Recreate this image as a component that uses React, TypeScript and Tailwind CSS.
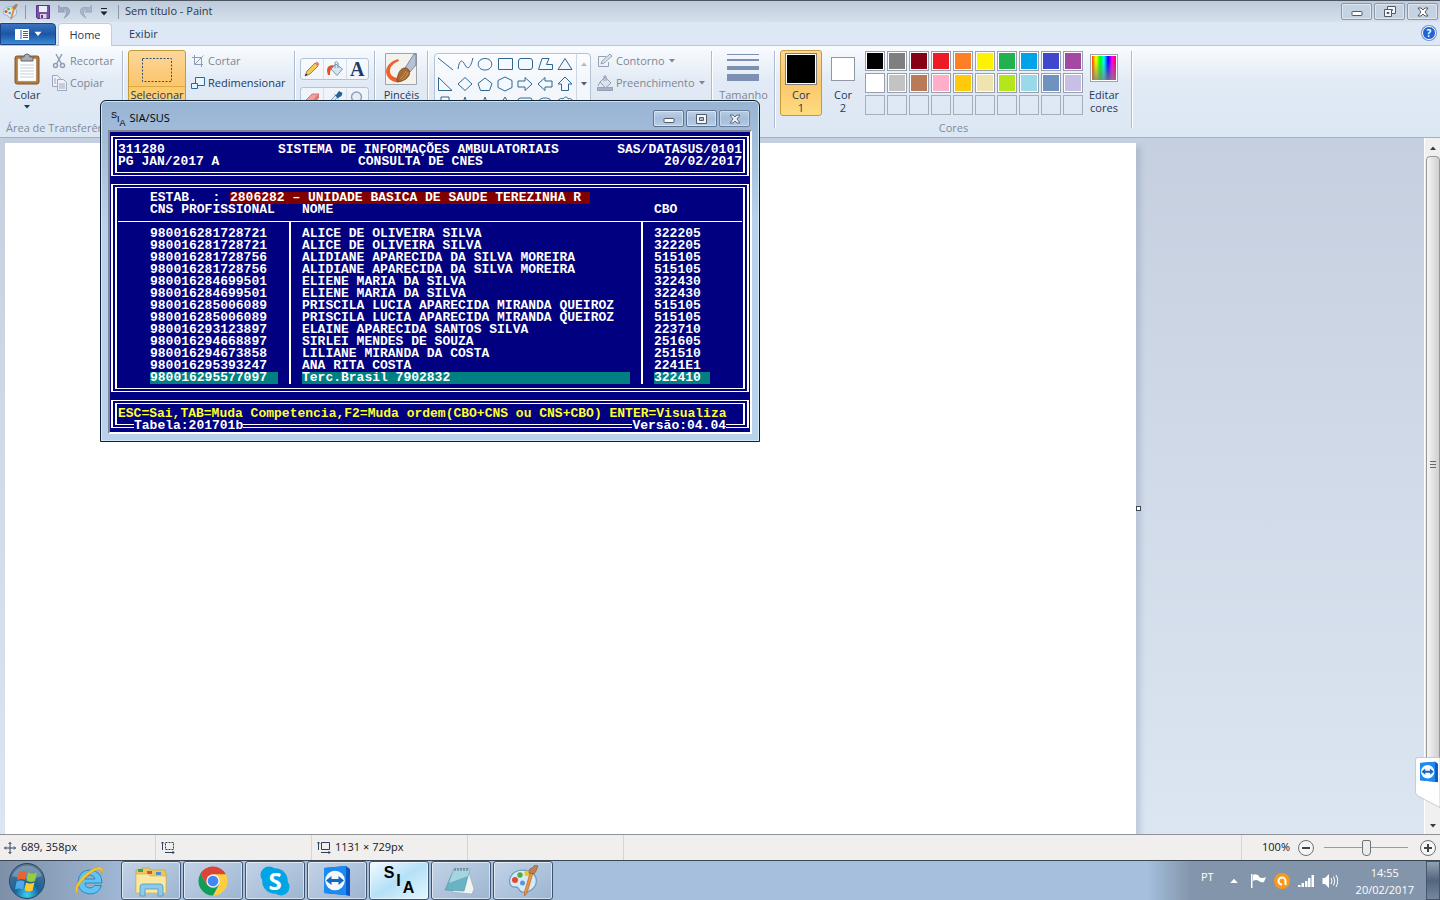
import React from "react";
import clsx from "clsx";

const palette = [
  "#000000", "#7f7f7f", "#880015", "#ed1c24", "#ff7f27", "#fff200", "#22b14c", "#00a2e8", "#3f48cc", "#a349a4",
  "#ffffff", "#c3c3c3", "#b97a57", "#ffaec9", "#ffc90e", "#efe4b0", "#b5e61d", "#99d9ea", "#7092be", "#c8bfe7"
];

type Professional = { cns: string; name: string; cbo: string };

const professionals: Professional[] = [
  { cns: "980016281728721", name: "ALICE DE OLIVEIRA SILVA", cbo: "322205" },
  { cns: "980016281728721", name: "ALICE DE OLIVEIRA SILVA", cbo: "322205" },
  { cns: "980016281728756", name: "ALIDIANE APARECIDA DA SILVA MOREIRA", cbo: "515105" },
  { cns: "980016281728756", name: "ALIDIANE APARECIDA DA SILVA MOREIRA", cbo: "515105" },
  { cns: "980016284699501", name: "ELIENE MARIA DA SILVA", cbo: "322430" },
  { cns: "980016284699501", name: "ELIENE MARIA DA SILVA", cbo: "322430" },
  { cns: "980016285006089", name: "PRISCILA LUCIA APARECIDA MIRANDA QUEIROZ", cbo: "515105" },
  { cns: "980016285006089", name: "PRISCILA LUCIA APARECIDA MIRANDA QUEIROZ", cbo: "515105" },
  { cns: "980016293123897", name: "ELAINE APARECIDA SANTOS SILVA", cbo: "223710" },
  { cns: "980016294668897", name: "SIRLEI MENDES DE SOUZA", cbo: "251605" },
  { cns: "980016294673858", name: "LILIANE MIRANDA DA COSTA", cbo: "251510" },
  { cns: "980016295393247", name: "ANA RITA COSTA", cbo: "2241E1" },
  { cns: "980016295577097", name: "Terc.Brasil 7902832", cbo: "322410" }
];

const selectedRow = professionals.length - 1;

// 16x16 outlines shown in the shapes gallery
const shapes = [
  "M1 2 L16 14",
  "M1 13 C3 1 6 5 8 9 S13 14 16 2",
  "M8 2.5 C17 2.5 17 14 8 14 S-1 2.5 8 2.5Z",
  "M1.5 2.5H15.5V13.5H1.5Z",
  "M4 2.5H13Q15.5 2.5 15.5 5V11Q15.5 13.5 13 13.5H4Q1.500 13.500 1.500 11V5Q1.500 2.500 4 2.500Z",
  "M1.500 13.500L5 2.500H12L9.500 8.500H15.500V13.500Z",
  "M8 2.500L15 13.500H1Z",
  "M1.500 1.500V14.500H15Z",
  "M8 1.500L15 8L8 14.500L1 8Z",
  "M8 2L15 7.500L12.500 14.500H3.500L1 7.500Z",
  "M8 1L15 4.500V11.500L8 15L1 11.500V4.500Z",
  "M1 5H8V1.500L15 8L8 14.500V11H1Z",
  "M15 5H8V1.500L1 8L8 14.500V11H15Z",
  "M8 1L15 8H11.500V14.500H4.500V8H1Z",
  "M4 1H12V8H15L8 15L1 8H4Z",
  "M8 1L10 6.500L15 8L10 9.500L8 15L6 9.500L1 8L6 6.500Z",
  "M8 1L10 6H15L11 9.500L12.500 15L8 12L3.500 15L5 9.500L1 6H6Z",
  "M8 1L10 4.500H15L12.500 8L15 11.500H10L8 15L6 11.500H1L3.500 8L1 4.500H6Z",
  "M4 2H13Q15 2 15 4V9Q15 11 13 11H8L4 15V11Q1 11 1 9V4Q1 2 4 2Z",
  "M8 2C17 2 17 11 8 11L4 15V11C-1 9 0 2 8 2Z",
  "M3 8C-1 5 3 1 6 3C8 0 11 1 11 3C15 1 17 6 14 8C15 12 10 13 8 11C5 13 1 12 3 8Z"
];

const PaletteIcon = ({ className }: { className?: string }) => (
  <svg viewBox="0 0 32 32" className={className} aria-hidden="true">
    <path d="M4 11C9 3 26 3 29 13C31 22 23 28 15 27C11 26 13 22 9 22C3 23 1 17 4 11Z" fill="#d9e9f6" stroke="#6f9dc4" strokeWidth="1.300" />
    <circle cx="8" cy="15" r="3" fill="#e04a35" />
    <circle cx="13" cy="10" r="2.700" fill="#4fae3d" />
    <circle cx="20" cy="8.500" r="2.700" fill="#f1c232" />
    <circle cx="15.500" cy="18" r="2.500" fill="#5b97d6" />
    <path d="M26 8L20 28L17.500 31L17.500 27L23 8Z" fill="#ee9440" stroke="#b6642a" strokeWidth="0.700" />
    <path d="M22 8Q22 3 25 3L28 0L31 1L29 6L27 9Z" fill="#ba8157" stroke="#865430" strokeWidth="0.600" />
  </svg>
);

const TeamViewerIcon = ({ className }: { className?: string }) => (
  <svg viewBox="0 0 32 32" className={className} aria-hidden="true">
    <path d="M3 3L25 1L29 4V31L24 30L3 28Z" fill="#0757c8" />
    <path d="M3 3L25 1V30L3 28Z" fill="#1b8bf2" />
    <circle cx="14" cy="15.500" r="9.800" fill="#f5f9fd" />
    <path d="M5 15.500L10.500 11V14H17.500V11L23 15.500L17.500 20V17H10.500V20Z" fill="#1567c4" />
  </svg>
);

const SiaIcon = ({ large }: { large?: boolean }) => (
  <span
    className={clsx(
      "flex justify-center font-['Liberation_Sans',sans-serif] text-black",
      large ? "h-[31px] gap-0.5 text-base leading-4 font-bold" : "h-4 text-[9px] leading-2"
    )}
    aria-hidden="true"
  >
    <span className="self-start">S</span>
    <span className="self-center">I</span>
    <span className="self-end">A</span>
  </span>
);

const DownArrow = ({ className }: { className?: string }) => (
  <svg viewBox="0 0 6 4" className={clsx("h-1 w-1.5 shrink-0", className)} aria-hidden="true">
    <path d="M0 0H6L3 3.500Z" fill="currentColor" />
  </svg>
);

const WindowButtons = ({ restored, blue }: { restored?: boolean; blue?: boolean }) => {
  const button = clsx(
    "flex h-[17px] w-[31px] items-center justify-center rounded-[2px] border shadow-[inset_0_0_0_1px_rgba(255,255,255,0.45)]",
    blue ? "border-[#5e7390] bg-linear-to-b from-[#bfd2e8] via-[#a7bfdb] to-[#b7cee8]" : "border-[#8b98aa] bg-[#c5d2e2]"
  );
  return (
    <div className="flex gap-0.5">
      <button type="button" aria-label="Minimizar" className={button}>
        <svg viewBox="0 0 12 10" className="h-2.5 w-3">
          <rect x="1" y="4.500" width="10" height="4" rx="0.500" fill="#fff" stroke="#545966" />
        </svg>
      </button>
      <button type="button" aria-label="Maximizar" className={button}>
        <svg viewBox="0 0 13 12" className="h-3 w-[13px]" fill="#f4f7fa" stroke="#545966">
          {restored ? (
            <>
              <path d="M4.500 0.500H12.500V7.500H4.500Z" />
              <path d="M7.500 3.500H9.500V4.500H7.500Z" />
              <path d="M1.500 3.500H8.500V10.500H1.500Z" />
              <path d="M4 6.500H6V7.500H4Z" />
            </>
          ) : (
            <>
              <path d="M1.500 1.500H11.500V10.500H1.500Z" />
              <path d="M4.500 4.500H8.500V7.500H4.500Z" fill="#a9bdd4" />
            </>
          )}
        </svg>
      </button>
      <button type="button" aria-label="Fechar" className={clsx(button, blue && "opacity-80")}>
        <svg viewBox="0 0 12 10" className="h-2.5 w-3">
          <path d="M1 1H4L6 3L8 1H11L8 5L11 9H8L6 7L4 9H1L4 5Z" fill="#fff" stroke="#545966" />
        </svg>
      </button>
    </div>
  );
};

const TitleBar = () => (
  <header className="flex h-[22px] items-center border-t border-[#4d5560] bg-linear-to-b from-[#bdcada] to-[#d6e1ed] pr-0.5 pl-0.5">
    <PaletteIcon className="size-4" />
    <span className="ml-[7px] h-3.5 w-px bg-[#8c99a9]" />
    <button type="button" aria-label="Salvar" className="ml-2.5">
      <svg viewBox="0 0 14 14" className="size-3.5">
        <path d="M0.500 0.500H13.500V13.500H1.500L0.500 12.500Z" fill="#7b4fa8" stroke="#59368a" />
        <path d="M3 1H11V7H3Z" fill="#e9eef8" />
        <path d="M4 9H10.500V13.500H4Z" fill="#d8d5e6" />
        <path d="M5 10H7V13H5Z" fill="#59368a" />
      </svg>
    </button>
    <button type="button" aria-label="Desfazer" className="ml-2">
      <svg viewBox="0 0 13 14" className="h-3.5 w-[13px]">
        <path d="M0 0V7H7L4.500 5C9 3 10 8 6 13C14 9 14 0 3 3Z" fill="#9eacc2" stroke="#8797af" strokeWidth="0.800" />
      </svg>
    </button>
    <button type="button" aria-label="Refazer" className="ml-2">
      <svg viewBox="0 0 13 14" className="h-3.5 w-[13px]">
        <path d="M13 0V7H6L8.500 5C4 3 3 8 7 13C-1 9 -1 0 10 3Z" fill="#a8b5c8" stroke="#93a1b8" strokeWidth="0.800" />
      </svg>
    </button>
    <button type="button" aria-label="Personalizar" className="ml-2">
      <svg viewBox="0 0 8 8" className="size-2">
        <path d="M1 0H7V1H1ZM0.500 3.500H7.500L4 7.500Z" fill="#1b1f26" />
      </svg>
    </button>
    <span className="ml-2.5 h-3.5 w-px bg-[#8c99a9]" />
    <h1 className="mr-auto ml-1.5 text-[11px] text-[#2b3543]">Sem título - Paint</h1>
    <WindowButtons restored />
  </header>
);

const TabRow = () => (
  <nav className="flex h-6 items-end border-b border-[#b8c6dc] bg-[#dee8f5]">
    <button
      type="button"
      aria-label="Arquivo"
      className="flex h-[22px] w-14 items-center justify-center gap-1.5 rounded-tr-sm border border-[#1c4484] bg-linear-to-b from-[#3a74bd] via-[#1c56a6] to-[#3a8bd6] text-white"
    >
      <svg viewBox="0 0 14 11" className="h-[11px] w-3.5">
        <path d="M0 0H14V11H0Z" fill="#fff" />
        <path d="M6 1V10M8 2.500H13M8 4.500H13M8 6.500H13M8 8.500H13" stroke="#2b62ad" />
      </svg>
      <DownArrow className="scale-125" />
    </button>
    <button
      type="button"
      className="-mb-px ml-0.5 h-[23px] w-[54px] rounded-t-sm border border-b-0 border-[#c0cde0] bg-white text-[11px] text-[#1e395b]"
    >
      Home
    </button>
    <button type="button" className="ml-[17px] h-[22px] text-[11px] text-[#1e395b]">
      Exibir
    </button>
    <button
      type="button"
      aria-label="Ajuda"
      className="mr-1 mb-[5px] ml-auto flex size-3.5 items-center justify-center rounded-full border border-white bg-[#2163d4] text-[10px] font-bold text-white ring-1 ring-[#6f95cf]"
    >
      ?
    </button>
  </nav>
);

const Separator = () => <span className="mt-[5px] h-[77px] w-0.5 shrink-0 border-l border-[#aebbd0] bg-white" />;

const ClipboardGroup = () => (
  <section className="flex w-[122px] shrink-0 flex-col pt-1">
    <div className="flex h-[70px]">
      <button type="button" className="mt-[3px] ml-2 flex w-[38px] flex-col items-center self-start text-[#1e395b]">
        <svg viewBox="0 0 26 32" className="h-8 w-[26px]">
          <rect x="1" y="3" width="24" height="28" rx="2" fill="#b07a3f" stroke="#83562a" />
          <path d="M4 6H22V28H4Z" fill="#fff" stroke="#d9d9d9" strokeWidth="0.500" />
          <path d="M6 12H20M6 15H20M6 18H20M6 21H20M6 24H20" stroke="#c5cfdb" />
          <path d="M7 8V4H10Q10 1 13 1T16 4H19V8Z" fill="#a8acb2" stroke="#63676d" />
        </svg>
        <span className="mt-0.5 text-[11px] leading-4">Colar</span>
        <DownArrow className="mt-0.5" />
      </button>
      <div className="ml-1.5 flex flex-col text-[11px] leading-[22px] text-[#7f8690]">
        <button type="button" className="flex h-[22px] items-center gap-1">
          <svg viewBox="0 0 14 16" className="h-4 w-3.5" fill="none" stroke="#8e9db3" strokeWidth="1.500">
            <path d="M4 1L9.500 11M10 1L4.500 11" />
            <circle cx="3.500" cy="12.500" r="2" />
            <circle cx="10.500" cy="12.500" r="2" />
          </svg>
          Recortar
        </button>
        <button type="button" className="flex h-[22px] items-center gap-0.5">
          <svg viewBox="0 0 16 16" className="size-4" fill="#eef2f8" stroke="#9ba8bb">
            <path d="M0.500 0.500H5.500L8.500 3.500V11.500H0.500Z" />
            <path d="M5.500 4.500H11.500L14.500 7.500V15.500H5.500Z" />
            <path d="M2 4H4M2 6H4M2 8H4M7 9H13M7 11H13M7 13H13" />
          </svg>
          Copiar
        </button>
      </div>
    </div>
    <h2 className="ml-1.5 text-[11px] leading-4 whitespace-nowrap text-[#7d8a9e]">Área de Transferência</h2>
  </section>
);

const ImageGroup = () => (
  <section className="flex w-[170px] shrink-0 pt-1 pl-1">
    <button
      type="button"
      className="flex h-[66px] w-[58px] flex-col items-center rounded-[3px] border border-[#c49a3c] bg-linear-to-b from-[#fcd79b] via-[#fbc66c] to-[#fddc7f] text-[#1e395b]"
    >
      <svg viewBox="0 0 32 26" className="mt-1.5 h-[26px] w-8" fill="none" stroke="#34536f">
        <path d="M1.500 1.500H30.500V24.500H1.500Z" strokeDasharray="2 1.500" />
      </svg>
      <span className="mt-[3px] w-full border-t border-[#dba845] text-center text-[11px] leading-4">Selecionar</span>
    </button>
    <div className="ml-1 flex flex-col pl-px text-[11px] leading-[22px]">
      <button type="button" className="flex h-[22px] items-center gap-[3px] text-[#7f8690]">
        <svg viewBox="0 0 14 14" className="size-3.5" fill="none" stroke="#8e9db3">
          <path d="M3.500 1V10.500H12M1 3.500H10.500V13M4 10L12.500 1.500" />
        </svg>
        Cortar
      </button>
      <button type="button" className="flex h-[22px] items-center gap-[3px] text-[#1e395b]">
        <svg viewBox="0 0 14 14" className="size-3.5" fill="#eaf4fc" stroke="#246a9c">
          <path d="M4.500 1.500H13.500V9.500H4.500Z" />
          <path d="M0.500 7.500H6.500V12.500H0.500Z" />
        </svg>
        Redimensionar
      </button>
    </div>
  </section>
);

const toolButton = "flex w-[23px] items-center justify-center border-l border-[#d5deea] first:border-l-0";

const ToolsGroup = () => (
  <section className="flex w-[78px] shrink-0 flex-col gap-[7px] pt-3 pl-1">
    <div className="flex h-[22px] w-[69px] rounded-[3px] border border-[#b5c3d6] bg-white/50">
      <button type="button" aria-label="Lápis" className={toolButton}>
        <svg viewBox="0 0 16 16" className="size-4">
          <path d="M1 15L3 10L11 2L14 5L6 13Z" fill="#f4c855" stroke="#8f6a2c" strokeWidth="0.800" />
          <path d="M11 2L13 0.500L15.500 3L14 5Z" fill="#e58079" />
          <path d="M1 15L2 12.500L3.500 14Z" fill="#222" />
        </svg>
      </button>
      <button type="button" aria-label="Preencher com cor" className={toolButton}>
        <svg viewBox="0 0 18 16" className="h-4 w-[18px]">
          <path d="M5 8L10 3L16.500 8L11 14.500Z" fill="#d3e4f2" stroke="#7d95ab" />
          <path d="M9 7V1.500Q10.500 -0.500 12 2V7" fill="none" stroke="#7d95ab" />
          <path d="M2 14C0 8 1 4 8 4L5 8Q4 10 4 14Z" fill="#e2512c" />
        </svg>
      </button>
      <button
        type="button"
        aria-label="Texto"
        className={clsx(toolButton, "font-['Liberation_Serif',serif] text-xl leading-5 font-bold text-[#1c3c66]")}
      >
        A
      </button>
    </div>
    <div className="flex h-[22px] w-[69px] rounded-[3px] border border-[#b5c3d6] bg-white/50">
      <button type="button" aria-label="Borracha" className={toolButton}>
        <svg viewBox="0 0 16 16" className="size-4">
          <path d="M1 11L8 4H15L9 11Z" fill="#f2a09c" stroke="#c4625f" strokeWidth="0.800" />
          <path d="M1 11H9L15 4V8L9 14H1Z" fill="#d97773" />
        </svg>
      </button>
      <button type="button" aria-label="Seletor de cores" className={toolButton}>
        <svg viewBox="0 0 16 16" className="size-4">
          <path d="M2 14L3 11L9 5L11 7L5 13Z" fill="#dbeaf5" stroke="#6f8faa" strokeWidth="0.800" />
          <path d="M7 4L9 5L12 1L15.500 3L14.500 6L11 8L12 10Z" fill="#24619b" />
        </svg>
      </button>
      <button type="button" aria-label="Lupa" className={toolButton}>
        <svg viewBox="0 0 16 16" className="size-4">
          <circle cx="7.500" cy="7" r="5" fill="#e3eefa" stroke="#93a3b8" strokeWidth="1.500" />
          <path d="M11 11L15 15" stroke="#93a3b8" strokeWidth="2" />
        </svg>
      </button>
    </div>
  </section>
);

const BrushesGroup = () => (
  <section className="flex w-[51px] shrink-0 justify-center pt-[7px]">
    <button type="button" className="flex flex-col items-center self-start text-[#1e395b]">
      <svg viewBox="0 0 32 32" className="size-8">
        <path d="M0.500 0.500H31.500V31.500H0.500Z" fill="#f3f2ef" stroke="#a2a5a8" />
        <path d="M13 6C6 8 1 13 1 19C2 26 8 30 15 29C18 28 17 25 14 25C8 25 5 22 5 18C5 13 9 10 14 8Z" fill="#f0602d" />
        <path d="M20 15L29 1H31V12L25 19Z" fill="#b4c2d4" stroke="#5b6b80" strokeWidth="0.700" />
        <path d="M12 29C12 20 16 14 21 15C28 17 25 28 12 29Z" fill="#a66b32" stroke="#704219" strokeWidth="0.700" />
        <path d="M15 26Q19 23 21 18M17 27Q22 24 23 19" fill="none" stroke="#d3a468" strokeWidth="0.700" />
      </svg>
      <span className="mt-0.5 text-[11px] leading-4">Pincéis</span>
    </button>
  </section>
);

const ShapesGroup = () => (
  <section className="flex w-[282px] shrink-0 pt-1.5 pl-[5px]">
    <div className="mt-px flex h-[66px] w-[157px] overflow-hidden rounded-sm border border-[#b5c3d6] bg-white/60">
      <div className="grid flex-1 grid-cols-7 content-start">
        {shapes.map((d) => (
          <button type="button" key={d} aria-label="Forma" className="flex h-5 items-center justify-center">
            <svg viewBox="0 0 17 16" className="h-4 w-[17px]" fill="#f3f9fe" stroke="#2f6793">
              <path d={d} />
            </svg>
          </button>
        ))}
      </div>
      <div className="flex w-3.5 flex-col items-center border-l border-[#ccd6e4] text-[#4c5b70]">
        <DownArrow className="mt-2 rotate-180 opacity-40" />
        <DownArrow className="mt-4" />
        <DownArrow className="mt-4" />
      </div>
    </div>
    <div className="-mt-0.5 ml-1.5 flex flex-col text-[11px] leading-[22px] text-[#7f8690]">
      <button type="button" className="flex h-[22px] items-center gap-[3px]">
        <svg viewBox="0 0 16 16" className="size-4" fill="none" stroke="#93a1b5">
          <path d="M9 3.500H1.500V13.500H11.500V9" />
          <path d="M4 11L5 8L13 1L15 3L7 10Z" fill="#dbe2ec" />
        </svg>
        Contorno
        <DownArrow className="ml-px" />
      </button>
      <button type="button" className="flex h-[22px] items-center gap-[3px]">
        <svg viewBox="0 0 16 16" className="size-4" fill="#dbe2ec" stroke="#93a1b5">
          <path d="M0.500 12.500H15.500V15.500H0.500Z" fill="#a5b2c6" />
          <path d="M3 7L8 2L14 8L8.500 13Z" />
          <path d="M7 6V1H9V6M3 7L1 11" fill="none" />
        </svg>
        Preenchimento
        <DownArrow className="ml-px" />
      </button>
    </div>
  </section>
);

const SizeGroup = () => (
  <section className="flex w-[61px] shrink-0 justify-center pt-2">
    <button type="button" className="flex flex-col items-center self-start text-[#7f8690]">
      <span className="flex h-[33px] w-8 flex-col">
        <span className="h-px bg-[#7b90b3]" />
        <span className="mt-1 h-0.5 bg-[#7b90b3]" />
        <span className="mt-[5px] h-1 bg-[#7b90b3]" />
        <span className="mt-1 h-[7px] bg-[#7b90b3]" />
      </span>
      <span className="text-[11px] leading-4">Tamanho</span>
    </button>
  </section>
);

const ColorsGroup = () => (
  <section className="flex w-[355px] shrink-0 flex-col pt-1">
    <div className="flex h-[70px] pl-1 text-[11px] leading-[13px] text-[#1e395b]">
      <button
        type="button"
        className="flex h-[66px] w-[42px] flex-col items-center rounded-[3px] border border-[#c49a3c] bg-linear-to-b from-[#fcd79b] via-[#fbc66c] to-[#fddc7f] pt-0.5"
      >
        <span className="size-8 border border-[#7f7f7f] bg-black shadow-[inset_0_0_0_1px_#fff]" />
        <span className="mt-[3px]">
          Cor
          <br />1
        </span>
      </button>
      <button type="button" className="flex h-[66px] w-[42px] flex-col items-center pt-[7px]">
        <span className="size-6 border border-[#8f99a6] bg-white" />
        <span className="mt-[7px]">
          Cor
          <br />2
        </span>
      </button>
      <div className="mt-px ml-px grid grid-cols-10 content-start gap-0.5">
        {palette.map((color) => (
          <button
            type="button"
            key={color}
            aria-label={color}
            className="size-5 border border-[#98a0ab] shadow-[inset_0_0_0_1px_#fff]"
            style={{ backgroundColor: color }}
          />
        ))}
        {Array.from({ length: 10 }, (_, i) => (
          <button type="button" key={i} aria-label="Cor personalizada" className="size-5 border border-[#a6aeb9]" />
        ))}
      </div>
      <button type="button" className="ml-[3px] flex w-9 flex-col items-center pt-1">
        <span className="size-7 border border-[#a0a4aa] bg-white p-px">
          <span className="block size-full bg-[linear-gradient(to_top,rgba(128,128,128,0.8),transparent_80%),linear-gradient(to_right,#f40,#ff0,#0f0,#0ff,#00f,#f0f,#f04)]" />
        </span>
        <span className="mt-1.5">
          Editar
          <br />
          cores
        </span>
      </button>
    </div>
    <h2 className="text-center text-[11px] leading-4 text-[#7d8a9e]">Cores</h2>
  </section>
);

const Ribbon = () => (
  <div className="flex h-[92px] overflow-hidden border-b border-[#9fb0c8] bg-linear-to-b from-[#f9fcff] via-[#e1eaf5] via-40% to-[#dce7f4]">
    <ClipboardGroup />
    <Separator />
    <ImageGroup />
    <Separator />
    <ToolsGroup />
    <Separator />
    <BrushesGroup />
    <Separator />
    <ShapesGroup />
    <Separator />
    <SizeGroup />
    <Separator />
    <ColorsGroup />
    <Separator />
  </div>
);

const Workspace = () => (
  <main className="flex flex-1 bg-linear-to-b from-[#c5cfdf] to-[#dce6f2]">
    <div className="mt-[5px] ml-[5px] w-[1131px] bg-white shadow-[5px_4px_5px_rgba(110,130,160,0.25)]" />
    <span className="mt-11 size-[5px] self-center border border-[#3c4653] bg-white" />
    <div className="ml-auto flex w-4 flex-col items-center border-l border-white bg-[#f0f0f0] text-[#3a3a3a]">
      <DownArrow className="mt-2 rotate-180" />
      <div className="mt-1.5 flex h-[618px] w-3.5 items-center justify-center rounded-sm border border-[#979797] bg-linear-to-r from-[#f6f6f6] to-[#cfcfd2]">
        <span className="h-2 w-1.5 bg-[repeating-linear-gradient(to_bottom,#666_0_1px,transparent_1px_3px)]" />
      </div>
      <DownArrow className="mt-auto mb-1.5" />
    </div>
  </main>
);

const SizeIcon = ({ dashed }: { dashed?: boolean }) => (
  <svg viewBox="0 0 14 13" className="h-[13px] w-3.5 shrink-0" fill="none" stroke="#2e425f">
    <path d="M4.500 1.500H12.500V8.500H4.500Z" strokeDasharray={dashed ? "2 1" : undefined} />
    <path d="M1.500 1V9M0 2.500L1.500 1L3 2.500M4 11.500H13M11.500 10L13 11.500L11.500 13" />
  </svg>
);

const StatusBar = () => (
  <footer className="flex h-[26px] items-stretch border-t border-[#8e9297] bg-[#f1eeee] text-[11px] text-[#14181d]">
    <div className="flex w-[156px] items-center gap-[5px] border-r border-[#d5d3d3] pl-1">
      <svg viewBox="0 0 12 12" className="size-3" fill="none" stroke="#2e425f">
        <path d="M6 0.500V11.500M0.500 6H11.500M4.500 2L6 0.500L7.500 2M4.500 10L6 11.500L7.500 10M2 4.500L0.500 6L2 7.500M10 4.500L11.500 6L10 7.500" />
      </svg>
      689, 358px
    </div>
    <div className="flex w-[156px] items-center border-r border-[#d5d3d3] pl-[5px]">
      <SizeIcon dashed />
    </div>
    <div className="flex w-[156px] items-center gap-1 border-r border-[#d5d3d3] pl-[5px]">
      <SizeIcon />
      1131 × 729px
    </div>
    <div className="w-[156px] border-r border-[#d5d3d3]" />
    <div className="ml-auto flex items-center border-l border-[#d5d3d3] pr-1 pl-5">
      <label htmlFor="zoom">100%</label>
      <button type="button" aria-label="Menos zoom" className="ml-2">
        <svg viewBox="0 0 16 16" className="size-4">
          <circle cx="8" cy="8" r="7.500" fill="#f6f6f6" stroke="#6d7074" />
          <path d="M4 8H12" stroke="#444" strokeWidth="2" />
        </svg>
      </button>
      <input
        id="zoom"
        type="range"
        defaultValue={50}
        className="mr-3 ml-2.5 h-4 w-[84px] appearance-none bg-[linear-gradient(#9b9b9b,#9b9b9b)] bg-[length:100%_1px] bg-center bg-no-repeat [&::-webkit-slider-thumb]:h-4 [&::-webkit-slider-thumb]:w-[9px] [&::-webkit-slider-thumb]:appearance-none [&::-webkit-slider-thumb]:rounded-[2px] [&::-webkit-slider-thumb]:rounded-b-[4px] [&::-webkit-slider-thumb]:border [&::-webkit-slider-thumb]:border-[#6f7276] [&::-webkit-slider-thumb]:bg-[#ececec]"
      />
      <button type="button" aria-label="Mais zoom">
        <svg viewBox="0 0 16 16" className="size-4">
          <circle cx="8" cy="8" r="7.500" fill="#f6f6f6" stroke="#6d7074" />
          <path d="M4 8H12M8 4V12" stroke="#444" strokeWidth="2" />
        </svg>
      </button>
    </div>
  </footer>
);

const taskButton =
  "flex h-[39px] w-[60px] items-center justify-center rounded-[3px] border border-[#3f556f] shadow-[inset_0_0_0_1px_rgba(255,255,255,0.55)]";
const taskIdle = "bg-linear-to-br from-[#c3d3e7] to-[#9db5d1]";

const Taskbar = () => (
  <footer className="flex h-10 items-center border-t border-[#3a4654] bg-linear-to-r from-[#7d90a8] via-[#a5bfdd] via-10% to-[#a5bfdd]">
    <button type="button" aria-label="Iniciar" className="ml-2">
      <svg viewBox="0 0 38 38" className="size-[38px]">
        <defs>
          <radialGradient id="orb" cx="0.500" cy="0.900" r="0.900">
            <stop offset="0" stopColor="#3fd0f5" />
            <stop offset="0.400" stopColor="#17629b" />
            <stop offset="1" stopColor="#5e7891" />
          </radialGradient>
        </defs>
        <circle cx="19" cy="19" r="17.500" fill="url(#orb)" stroke="#294560" />
        <path d="M4 14A16 16 0 0 1 34 14Q19 20 4 14Z" fill="#fff" opacity="0.250" />
        <path d="M11 10Q15 8 18.500 10L17 18Q13 16 9 18Z" fill="#f0602a" />
        <path d="M20 10.500Q25 13 29 10.500L27 19Q22 21 18.500 18.500Z" fill="#9acb3b" />
        <path d="M8.500 19.500Q13 17.500 16.500 19.500L15 27.500Q11 25.500 7 27.500Z" fill="#4fa9e8" />
        <path d="M18 20.500Q22 22.500 26.500 20.500L24.500 28.500Q20 30.500 16.500 28Z" fill="#fbcb2e" />
      </svg>
    </button>
    <button type="button" aria-label="Internet Explorer" className="flex w-[75px] justify-center pl-2.5">
      <svg viewBox="0 0 32 32" className="size-8">
        <path
          d="M29 18H12Q12 23 17 23Q20 23 21.500 20.500H28.500Q25.500 29 17 29Q5 28 5 17Q6 5 17 5Q29 6 29 18ZM12 14H22Q21 10 17 10Q13 10 12 14Z"
          fill="#5fc4f2"
          stroke="#1a78be"
          strokeWidth="0.800"
          fillRule="evenodd"
        />
        <path d="M6 29C-3 27 6 12 18 5C26 0 32 1 29 9C29 3 24 4 18 8C8 15 1 26 6 29Z" fill="#f8c52c" stroke="#cc9415" strokeWidth="0.400" />
      </svg>
    </button>
    <div className="flex gap-0.5">
      <button type="button" aria-label="Windows Explorer" className={clsx(taskButton, taskIdle)}>
        <svg viewBox="0 0 34 32" className="h-8 w-[34px]">
          <path d="M2 5H8V3H15L17 5H31L32 8V26H2Z" fill="#eac761" stroke="#c5a146" strokeWidth="0.700" />
          <path d="M4 4H9V7H4Z" fill="#38a848" />
          <path d="M13 6H18V9H13Z" fill="#d6543a" />
          <path d="M22 7H27V10H22Z" fill="#4c92cc" />
          <path d="M2 9H14L16 11H32V28H2Z" fill="#f9e7a2" stroke="#d3b45c" strokeWidth="0.700" />
          <path d="M6 31V22Q6 19 9 19H26Q29 19 29 22V31H24V24H11V31Z" fill="#8fcbe9" stroke="#4d97c2" strokeWidth="0.800" />
        </svg>
      </button>
      <button type="button" aria-label="Google Chrome" className={clsx(taskButton, taskIdle)}>
        <svg viewBox="0 0 30 30" className="size-[30px]">
          <path d="M15 15L2.400 7.700A14.600 14.600 0 0 1 27.600 7.700Z" fill="#db4437" />
          <path d="M27.600 7.700A14.600 14.600 0 0 1 15 29.600L21 18L15 8H27.600Z" fill="#ffcd40" />
          <path d="M2.400 7.700A14.600 14.600 0 0 0 15 29.600L21 18.500L9 18.500Z" fill="#0f9d58" />
          <path d="M15 8.300H27.600A14.600 14.600 0 0 0 2.400 7.700L9 18.500Z" fill="#db4437" />
          <circle cx="15" cy="15" r="6.700" fill="#f1f1f1" />
          <circle cx="15" cy="15" r="5.300" fill="#4285f4" />
        </svg>
      </button>
      <button type="button" aria-label="Skype" className={clsx(taskButton, taskIdle)}>
        <span className="relative flex size-[30px] items-center justify-center">
          <svg viewBox="0 0 30 30" className="absolute inset-0">
            <circle cx="9" cy="9" r="8.500" fill="#00a5e5" />
            <circle cx="21" cy="21" r="8.500" fill="#00a5e5" />
            <circle cx="15" cy="15" r="12.800" fill="#00a5e5" />
          </svg>
          <span className="relative text-2xl leading-6 font-bold text-white">S</span>
        </span>
      </button>
      <button type="button" aria-label="TeamViewer" className={clsx(taskButton, taskIdle)}>
        <TeamViewerIcon className="size-8" />
      </button>
      <button type="button" aria-label="SIA/SUS" className={clsx(taskButton, "bg-linear-to-br from-[#f3fbff] via-[#b5e0f7] to-[#e3f7fe]")}>
        <SiaIcon large />
      </button>
      <button
        type="button"
        aria-label="Bloco de notas"
        className={clsx(taskButton, taskIdle, "shadow-[inset_-1px_0_0_1px_rgba(255,255,255,0.55),inset_-4px_0_0_#5d738d]")}
      >
        <svg viewBox="0 0 32 32" className="mr-1 size-8">
          <path d="M25 5L31 24L29 29L9 27Z" fill="#f2f4f2" stroke="#9aa7ad" strokeWidth="0.600" />
          <path d="M11 4H27L21 26L2 25Z" fill="#69b3c4" stroke="#4a8fa2" strokeWidth="0.600" />
          <path d="M11 4H27L25 11L6 18Z" fill="#a4d6df" />
          <path d="M12 3V6M15 3V6M18 3V6M21 3V6M24 3V6" stroke="#5c656b" />
        </svg>
      </button>
      <button type="button" aria-label="Paint" className={clsx(taskButton, taskIdle)}>
        <PaletteIcon className="size-8" />
      </button>
    </div>
    <div className="ml-auto flex h-full items-center bg-linear-to-r from-transparent via-[#8395ab] via-15% to-[#8395ab] pl-[54px] text-[11px] text-white">
      <span className="mb-1.5">PT</span>
      <button type="button" aria-label="Mostrar ícones ocultos" className="ml-4">
        <DownArrow className="h-[5px] w-2 rotate-180" />
      </button>
      <svg viewBox="0 0 16 16" className="ml-3 size-4" fill="#fff">
        <path d="M1 1H2.500V15H1ZM3 2Q6 0 9 3V8Q6 6 3 8ZM9 4Q12 6 16 4L14 9Q11 10 9 8Z" />
      </svg>
      <svg viewBox="0 0 16 16" className="ml-2 size-4">
        <circle cx="8" cy="8" r="8" fill="#f7991c" />
        <path d="M11.500 12V8A3.500 3.500 0 1 0 8 11.500" fill="none" stroke="#fff" strokeWidth="2" />
      </svg>
      <svg viewBox="0 0 16 14" className="ml-2 h-3.5 w-4" fill="#fff">
        <path d="M0 11H2.500V13H0ZM3.500 9H6V13H3.500ZM7 7H9.500V13H7ZM10 4H12.500V13H10ZM13.500 1H16V13H13.500Z" />
      </svg>
      <svg viewBox="0 0 16 16" className="ml-2 size-4" fill="#fff">
        <path d="M0.500 5H3L7 1V15L3 11H0.500Z" />
        <path d="M9 5Q11 8 9 11M11.500 3.500Q14 8 11.500 12.500M14 2Q17.500 8 14 14" fill="none" stroke="#fff" />
      </svg>
      <time className="ml-[18px] text-center leading-[17px]">
        14:55
        <br />
        20/02/2017
      </time>
      <button
        type="button"
        aria-label="Mostrar área de trabalho"
        className="ml-3 h-full w-3.5 border border-[#45566b] bg-linear-to-b from-[#92a2b5] via-[#52657c] to-[#7688a0]"
      />
    </div>
  </footer>
);

const DosBox = ({ className, children }: { className?: string; children: React.ReactNode }) => (
  <section className="mx-px border-x-2 border-y border-white p-0.5">
    <div className={clsx("border-x-2 border-y border-white px-px pt-1", className)}>{children}</div>
  </section>
);

const SiaWindow = () => (
  <div
    role="dialog"
    aria-label="SIA/SUS"
    className="absolute top-[100px] left-[100px] w-[660px] rounded-t-md border border-[#10202e] bg-[#b9d1ea] bg-linear-to-b from-[#98b4d3] via-[#b9d1ea] via-35% to-[#b9d1ea] px-[7px] pb-[7px] shadow-[inset_0_0_0_1px_rgba(215,240,250,0.8)]"
  >
    <div className="flex h-[29px] items-center gap-1 pt-1.5 pr-0.5 pl-[3px]">
      <SiaIcon />
      <h2 className="mr-auto text-[11px] text-black">SIA/SUS</h2>
      <WindowButtons blue />
    </div>
    <div className="border-2 border-t-[#808590] border-r-white border-b-white border-l-[#808590] bg-[#000080] pt-1 pb-1 font-['Liberation_Mono',monospace] text-[13px] leading-3 font-bold whitespace-pre text-white">
      <DosBox className="pb-1">
        <div className="grid grid-cols-[160px_1fr_auto]">
          <span>311280</span>
          <span>SISTEMA DE INFORMAÇÕES AMBULATORIAIS</span>
          <span className="text-right">SAS/DATASUS/0101</span>
          <span>PG JAN/2017 A</span>
          <span className="pl-20">CONSULTA DE CNES</span>
          <span className="text-right">20/02/2017</span>
        </div>
      </DosBox>
      <div className="h-2" />
      <DosBox className="pb-1">
        <p className="flex pl-8">
          <span className="w-20">ESTAB.  :</span>
          <span className="w-[360px] bg-[#800000]">2806282 – UNIDADE BASICA DE SAUDE TEREZINHA R</span>
        </p>
        <table className="w-full table-fixed border-separate border-spacing-0 text-left">
          <colgroup>
            <col className="w-[171px]" />
            <col />
            <col className="w-[101px]" />
          </colgroup>
          <thead>
            <tr>
              <th className="border-b border-white p-0 pb-[5px] pl-8">CNS PROFISSIONAL</th>
              <th className="border-b border-white p-0 pb-[5px] pl-[13px]">NOME</th>
              <th className="border-b border-white p-0 pb-[5px] pl-[13px]">CBO</th>
            </tr>
          </thead>
          <tbody>
            {professionals.map((person, i) => {
              const highlight = i === selectedRow && "bg-[#008080]";
              const top = i === 0 && "pt-1.5";
              return (
                <tr key={i}>
                  <td className={clsx("p-0 pl-8", top)}>
                    <span className={clsx("block w-32", highlight)}>{person.cns}</span>
                  </td>
                  <td className={clsx("border-l-2 border-white p-0 pl-[11px]", top)}>
                    <span className={clsx("block w-[328px]", highlight)}>{person.name}</span>
                  </td>
                  <td className={clsx("border-l-2 border-white p-0 pl-[11px]", top)}>
                    <span className={clsx("block w-14", highlight)}>{person.cbo}</span>
                  </td>
                </tr>
              );
            })}
          </tbody>
        </table>
      </DosBox>
      <div className="h-2" />
      <div className="relative">
        <DosBox className="pb-1">
          <p className="text-[#ffff2a]">
            ESC=Sai,TAB=Muda Competencia,F2=Muda ordem(CBO+CNS ou CNS+CBO) ENTER=Visualiza
          </p>
        </DosBox>
        <span className="absolute -bottom-1 left-6 bg-[#000080]">Tabela:201701b</span>
        <span className="absolute right-6 -bottom-1 bg-[#000080]">Versão:04.04</span>
      </div>
    </div>
  </div>
);

// TeamViewer tab docked to the right edge of the screen
const DockedTab = () => (
  <div className="absolute right-0 bottom-[92px] h-[51px] w-[25px]">
    <svg viewBox="0 0 25 51" className="absolute inset-0">
      <path d="M25 0.500H3Q0.500 0.500 0.500 3V36L3 39L25 50.500Z" fill="#fff" stroke="#a9b2be" strokeWidth="0.600" />
    </svg>
    <TeamViewerIcon className="relative mt-1 ml-[3px] size-[22px]" />
  </div>
);

const App = () => (
  <div className="relative flex min-h-screen flex-col overflow-hidden font-['Open_Sans','Noto_Sans',sans-serif]">
    <TitleBar />
    <TabRow />
    <Ribbon />
    <Workspace />
    <StatusBar />
    <Taskbar />
    <SiaWindow />
    <DockedTab />
  </div>
);

export default App;
